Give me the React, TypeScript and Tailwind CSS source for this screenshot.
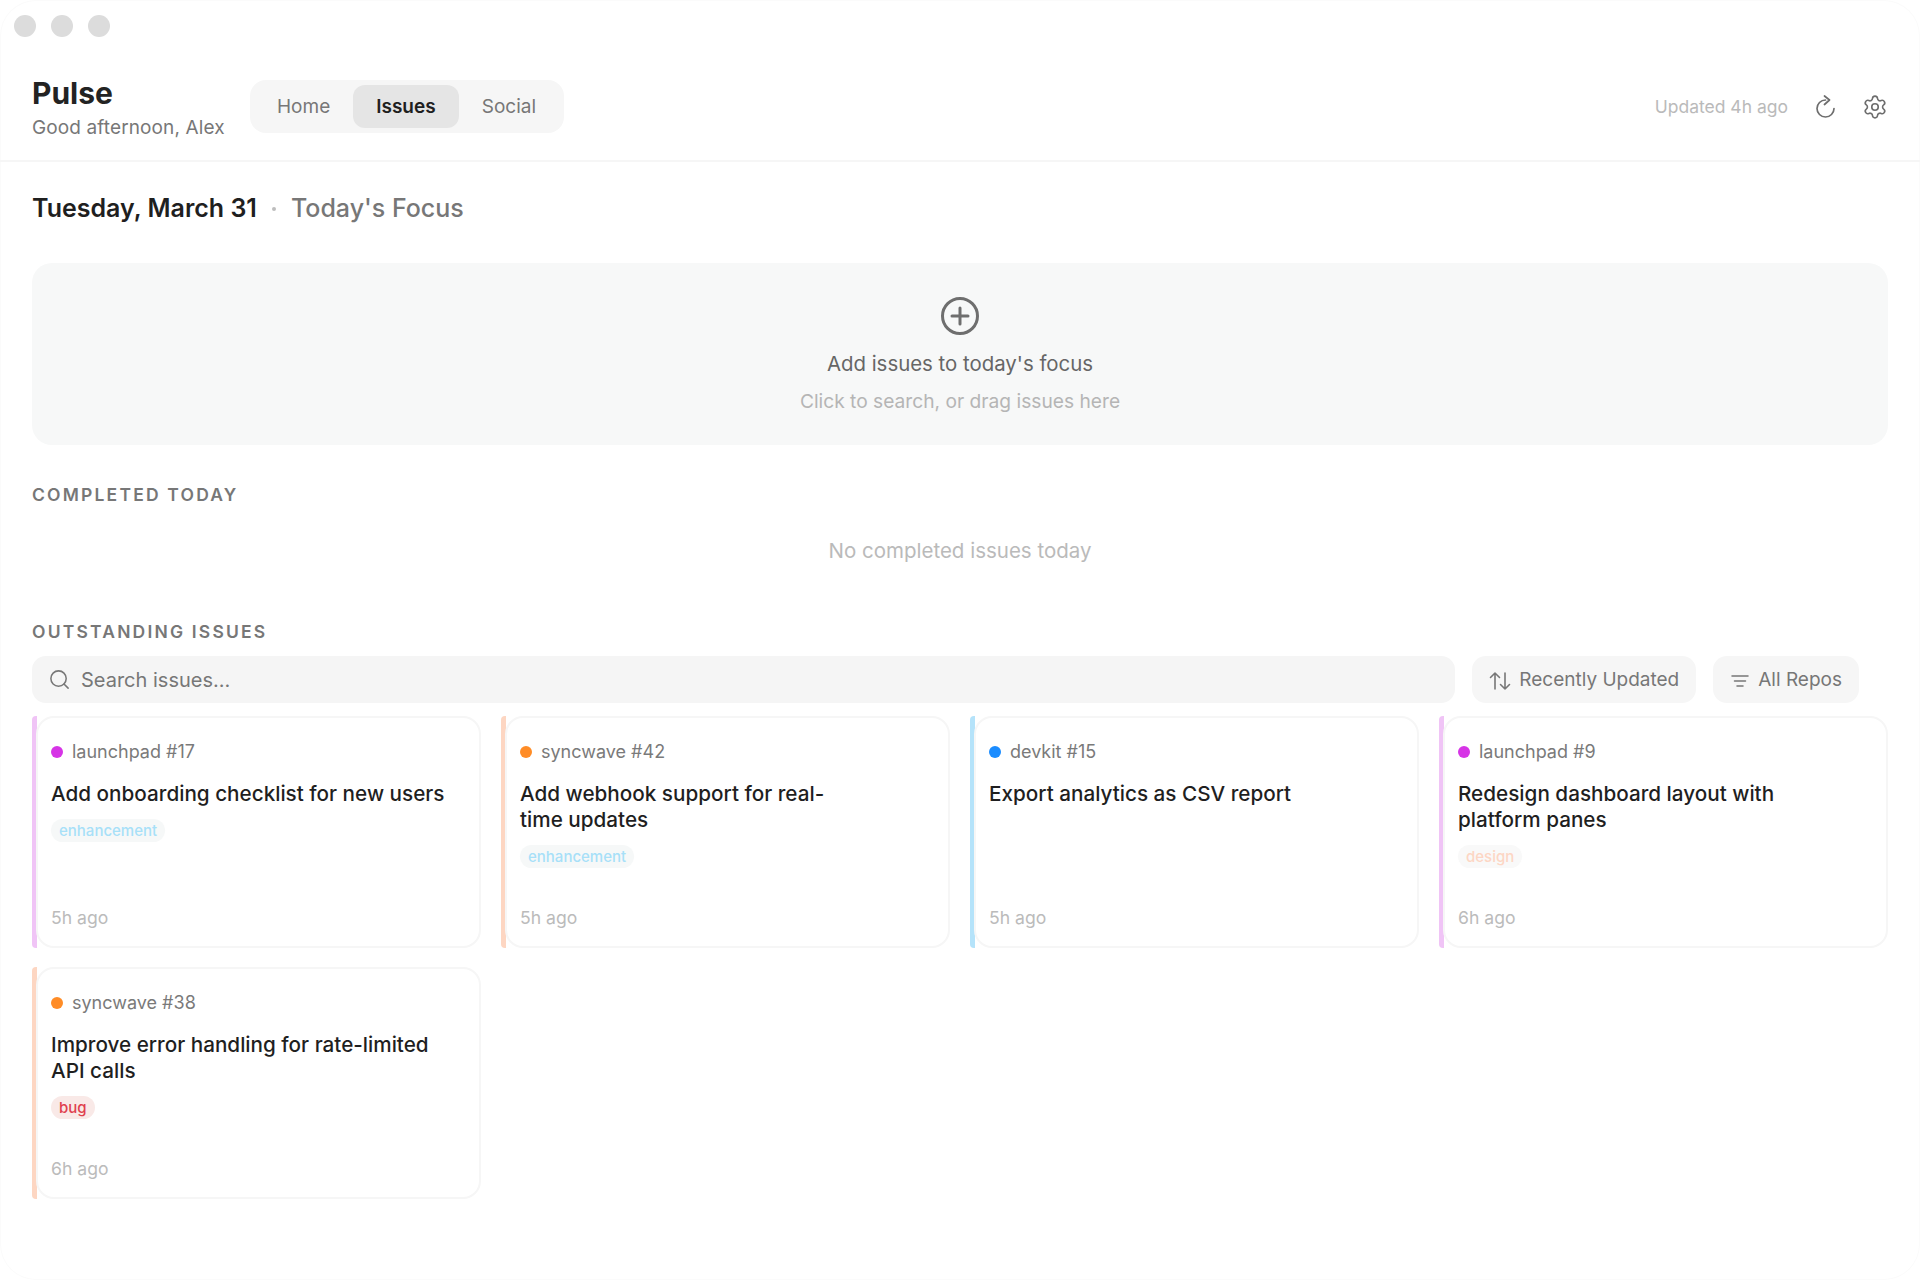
import { Search, Settings } from 'lucide-react'

type Issue = {
  repo: string
  number: number
  title: string
  tag: string
  tagClass: string
  dotClass: string
  barClass: string
  age: string
}

const issues: Issue[] = [
  {
    repo: 'launchpad',
    number: 17,
    title: 'Add onboarding checklist for new users',
    tag: 'enhancement',
    tagClass: 'bg-[#f6f8f8] text-[#a7e0f8]',
    dotClass: 'bg-[#d634e6]',
    barClass: 'bg-[#f0c4f6]',
    age: '5h ago',
  },
  {
    repo: 'syncwave',
    number: 42,
    title: 'Add webhook support for real-\ntime updates',
    tag: 'enhancement',
    tagClass: 'bg-[#f6f8f8] text-[#a7e0f8]',
    dotClass: 'bg-[#ff8c26]',
    barClass: 'bg-[#fdd6c2]',
    age: '5h ago',
  },
  {
    repo: 'devkit',
    number: 15,
    title: 'Export analytics as CSV report',
    tag: '',
    tagClass: '',
    dotClass: 'bg-[#1a8cff]',
    barClass: 'bg-[#b5e3fa]',
    age: '5h ago',
  },
  {
    repo: 'launchpad',
    number: 9,
    title: 'Redesign dashboard layout with\nplatform panes',
    tag: 'design',
    tagClass: 'bg-[#f9f9f9] text-[#fdd6c4]',
    dotClass: 'bg-[#d634e6]',
    barClass: 'bg-[#f0c4f6]',
    age: '6h ago',
  },
  {
    repo: 'syncwave',
    number: 38,
    title: 'Improve error handling for rate-limited\nAPI calls',
    tag: 'bug',
    tagClass: 'bg-[#f9e9e7] text-[#e0404e]',
    dotClass: 'bg-[#ff8c26]',
    barClass: 'bg-[#fdd6c2]',
    age: '6h ago',
  },
]

function IssueCard({ issue }: { issue: Issue }) {
  return (
    <div className="flex h-[232px]">
      <div className={`w-[5px] shrink-0 rounded-l-[4px] ${issue.barClass}`} />
      <div className="-ml-px flex min-w-0 flex-1 flex-col rounded-[18px] border-2 border-[#f6f6f6] bg-white pt-[19px] pb-[14px] pl-[13px]">
        <div className="flex h-[29px] items-center gap-[9px] text-[18px] text-[#7a7a7a]">
          <span className={`h-[12px] w-[12px] rounded-full ${issue.dotClass}`} />
          {issue.repo} #{issue.number}
        </div>
        <div className="mt-[15px] text-[20.7px] leading-[26px] font-medium whitespace-pre-line text-[#1f1f1f]">
          {issue.title}
        </div>
        {issue.tag && (
          <div className="mt-[11px]">
            <span className={`inline-block rounded-full px-[8px] text-[15px] leading-[23px] font-medium ${issue.tagClass}`}>
              {issue.tag}
            </span>
          </div>
        )}
        <div className="mt-auto text-[17.6px] leading-[29px] text-[#bbbbbb]">{issue.age}</div>
      </div>
    </div>
  )
}

export default function App() {
  return (
    <div className="h-[1280px] w-[1920px] overflow-hidden rounded-[36px] bg-white font-['Inter',sans-serif] shadow-[inset_0_0_0_1px_#fbfbfb]">
      <div className="flex gap-[15px] pt-[15px] pl-[14px]">
        <span className="h-[22px] w-[22px] rounded-full bg-[#dcdcdc]" />
        <span className="h-[22px] w-[22px] rounded-full bg-[#dcdcdc]" />
        <span className="h-[22px] w-[22px] rounded-full bg-[#dcdcdc]" />
      </div>

      <header className="flex h-[125px] items-center border-b-2 border-[#f6f6f6] px-[32px] pt-[16px]">
        <div className="w-[218px] pt-[2px]">
          <div className="text-[30px] leading-[36px] font-bold text-[#232323]">Pulse</div>
          <div className="mt-[5px] text-[19px] leading-[24px] tracking-[0.12px] text-[#777777]">Good afternoon, Alex</div>
        </div>
        <nav className="flex h-[53px] items-center rounded-[16px] bg-[#f6f6f6] px-[5px] text-[19px] text-[#777777]">
          <span className="pt-[2px] pr-[23px] pl-[22px]">Home</span>
          <span className="flex h-[43px] items-center rounded-[12px] bg-[#e5e5e5] px-[23px] pt-[2px] font-semibold text-[#1f1f1f]">
            Issues
          </span>
          <span className="px-[23px] pt-[2px]">Social</span>
        </nav>
        <div className="ml-auto flex items-center text-[#6e6e6e]">
          <span className="pt-[2px] text-[17.5px] text-[#bababa]">Updated 4h ago</span>
          <svg className="ml-[26px] h-[24px] w-[24px]" viewBox="0 0 24 24" fill="none" stroke="currentColor" strokeWidth="1.7" strokeLinecap="round" strokeLinejoin="round">
            <path d="M11.500 5a8.500 8.500 0 1 0 8.500 8.500" />
            <path d="M10.500 1 15.500 5 10.500 9.500" />
          </svg>
          <Settings className="ml-[24px]" size={26} strokeWidth={1.5} />
        </div>
      </header>

      <main className="px-[32px]">
        <h1 className="mt-[30px] flex h-[34px] items-center text-[25px] font-semibold text-[#1f1f1f]">
          Tuesday, March 31
          <span className="mx-[15px] h-[4px] w-[4px] rounded-full bg-[#bdbdbd]" />
          <span className="font-medium text-[#777777]">Today's Focus</span>
        </h1>

        <section className="mt-[37px] flex h-[182px] flex-col items-center rounded-[20px] bg-[#f7f8f8] pt-[33px]">
          <svg className="h-[40px] w-[40px] text-[#6e6e6e]" viewBox="0 0 40 40" fill="none" stroke="currentColor" strokeWidth="3" strokeLinecap="round">
            <circle cx="20" cy="20" r="17.500" />
            <path d="M20 12v16M12 20h16" />
          </svg>
          <div className="mt-[14px] text-[20.4px] leading-[28px] text-[#666666]">Add issues to today's focus</div>
          <div className="mt-[9px] text-[19.2px] leading-[28px] text-[#b5b5b5]">Click to search, or drag issues here</div>
        </section>

        <h2 className="mt-[38px] text-[17.500px] leading-[24px] font-semibold tracking-[0.125em] text-[#777777]">COMPLETED TODAY</h2>
        <div className="mt-[30px] text-center text-[20.500px] leading-[28px] text-[#bababa]">No completed issues today</div>

        <h2 className="mt-[55px] text-[17.500px] leading-[24px] font-semibold tracking-[0.125em] text-[#777777]">OUTSTANDING ISSUES</h2>

        <div className="mt-[12px] flex h-[47px] gap-[17px] pr-[29px] text-[#777777]">
          <div className="flex flex-1 items-center rounded-[14px] bg-[#f5f5f5] pl-[16px] text-[20px]">
            <Search size={23} strokeWidth={1.6} />
            <span className="ml-[10px]">Search issues...</span>
          </div>
          <div className="flex items-center rounded-[14px] bg-[#f6f6f6] pt-[2px] pr-[17px] pl-[16px] text-[19px]">
            <svg className="h-[24px] w-[24px]" viewBox="0 0 24 24" fill="none" stroke="currentColor" strokeWidth="1.6" strokeLinecap="round" strokeLinejoin="round">
              <path d="M7 20V4M2.500 8.500 7 4l4.500 4.500" />
              <path d="M17 4v16M12.500 15.500 17 20l4.500-4.500" />
            </svg>
            <span className="ml-[7px]">Recently Updated</span>
          </div>
          <div className="flex items-center rounded-[14px] bg-[#f6f6f6] pt-[2px] pr-[17px] pl-[18px] text-[19px]">
            <svg className="h-[18px] w-[18px]" viewBox="0 0 18 18" fill="none" stroke="currentColor" strokeWidth="1.5" strokeLinecap="round">
              <path d="M1 4h16M3.500 9h11M6 14h6" />
            </svg>
            <span className="ml-[9px]">All Repos</span>
          </div>
        </div>

        <div className="mt-[13px] grid grid-cols-4 gap-[19px] gap-x-[20px]">
          {issues.map((issue) => (
            <IssueCard key={`${issue.repo}-${issue.number}`} issue={issue} />
          ))}
        </div>
      </main>
    </div>
  )
}
